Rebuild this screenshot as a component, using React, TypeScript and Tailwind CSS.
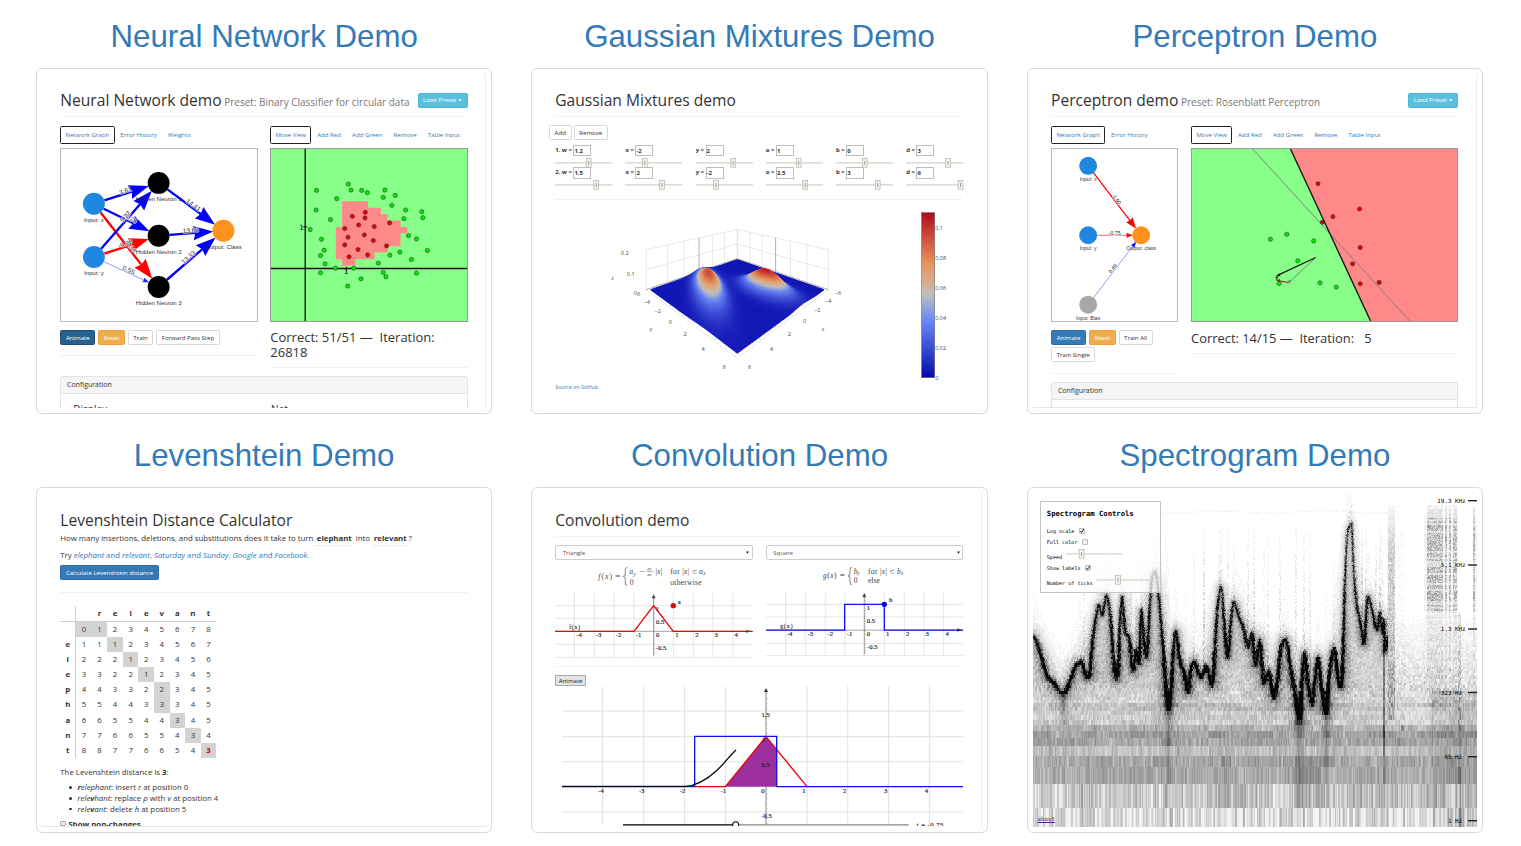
import React from "react";

/* ---------- shared pieces ---------- */

function Card({ title, children, right, bottom }: { title: string; children: React.ReactNode; right?: boolean; bottom?: boolean }) {
  return (
    <section className="flex w-[456.3px] flex-col">
      <h2 className="h-[68px] whitespace-nowrap pt-[18.5px] text-center font-['Liberation_Sans',sans-serif] text-[31.25px] leading-[35px] text-[#337ab7]">
        {title}
      </h2>
      <div className="h-[345.5px] rounded-[6px] border border-[#d9d9d9] bg-white p-[5px]">
        <div
          className={
            "relative h-[333.5px] overflow-hidden " +
            (right ? "border-r border-[#ececec] " : "") +
            (bottom ? "border-b border-b-[#e6e6e6]" : "")
          }
        >
          {children}
        </div>
      </div>
    </section>
  );
}

function Heading({ text, preset }: { text: string; preset?: string }) {
  return (
    <div className="flex h-[42.8px] w-[407.3px] items-start whitespace-nowrap border-b border-[#f3f3f3] pt-[17.5px]">
      <div className="text-[15.6px] leading-[16px] text-[#333]">
        {text}
        {preset && <span className="ml-[2.6px] text-[9.97px] text-[#777]">{preset}</span>}
      </div>
      {preset && (
        <div className="mt-[1.9px] ml-auto flex h-[15px] w-[50px] items-center justify-center gap-[2px] rounded-[2px] border border-[#46b8da] bg-[#5bc0de] text-[6px] text-white">
          Load Preset
          <svg width="4" height="3" viewBox="0 0 4 3">
            <path d="M0 .3h3.6L1.8 2.2z" fill="#fff" />
          </svg>
        </div>
      )}
    </div>
  );
}

function Tabs({ items }: { items: string[] }) {
  return (
    <div className="flex h-[17.6px] gap-[0.5px] whitespace-nowrap text-[6.1px] leading-[15px] text-[#337ab7]">
      {items.map((t, i) => (
        <div key={t} className={"rounded-[1.5px] border px-[4.3px] " + (i === 0 ? "border-[#222]" : "border-transparent")}>
          {t}
        </div>
      ))}
    </div>
  );
}

function Btn({ children, kind = "plain" }: { children: React.ReactNode; kind?: "plain" | "dark" | "primary" | "warn" }) {
  const k = {
    plain: "border-[#d8d8d8] bg-white text-[#333]",
    dark: "border-[#204d74] bg-[#286090] text-white",
    primary: "border-[#2e6da4] bg-[#337ab7] text-white",
    warn: "border-[#eea236] bg-[#f0ad4e] text-white",
  }[kind];
  return (
    <div className={"flex h-[15px] items-center whitespace-nowrap rounded-[1.5px] border px-[4.6px] text-[6.1px] leading-[13px] " + k}>{children}</div>
  );
}

function Panel({ children }: { children?: React.ReactNode }) {
  return (
    <div className="h-[60px] w-[407.3px] rounded-t-[2px] border border-[#e2e2e2]">
      <div className="h-[17px] border-b border-[#e2e2e2] bg-[#f5f5f5] pl-[5.8px] text-[7px] leading-[16.4px] text-[#333]">Configuration</div>
      {children}
    </div>
  );
}

/* ---------- network graphs ---------- */

type Pt = [number, number];
type EdgeSpec = { a: Pt; b: Pt; r: number; w: number; head: number; color: string; label: string; at?: number; opacity?: number; size?: number };

function Edge({ a, b, r, w, head, color, opacity = 1 }: EdgeSpec) {
  const dx = b[0] - a[0], dy = b[1] - a[1];
  const len = Math.hypot(dx, dy), ux = dx / len, uy = dy / len;
  const tip: Pt = [b[0] - ux * (r - 2), b[1] - uy * (r - 2)];
  const base: Pt = [tip[0] - ux * head, tip[1] - uy * head];
  const hw = head * 0.36;
  return (
    <g>
      <line x1={a[0] + ux * r} y1={a[1] + uy * r} x2={base[0] + ux * 6} y2={base[1] + uy * 6} stroke={color} strokeWidth={w} opacity={opacity} />
      <polygon
        fill={color}
        points={`${tip[0]},${tip[1]} ${base[0] - uy * hw},${base[1] + ux * hw} ${base[0] + ux * head * 0.1},${base[1] + uy * head * 0.1} ${base[0] + uy * hw},${base[1] - ux * hw}`}
      />
    </g>
  );
}

function EdgeLabel({ a, b, label, at = 0.5, size = 19.5 }: EdgeSpec) {
  const dx = b[0] - a[0], dy = b[1] - a[1];
  const ang = (Math.atan2(dy, dx) * 180) / Math.PI;
  const mx = a[0] + dx * at, my = a[1] + dy * at;
  return (
    <text x={mx} y={my} transform={`rotate(${ang} ${mx} ${my})`} textAnchor="middle" dy={-2} fontSize={size} fill="#222" stroke="#fff" strokeWidth={3} strokeOpacity={0.85} paintOrder="stroke">
      {label}
    </text>
  );
}

function Edges({ list }: { list: EdgeSpec[] }) {
  return (
    <>
      {list.map((e, i) => <Edge key={"e" + i} {...e} />)}
      {list.map((e, i) => <EdgeLabel key={"l" + i} {...e} />)}
    </>
  );
}

function Node({ x, y, r, fill, label, size = 18.3 }: { x: number; y: number; r: number; fill: string; label: string; size?: number }) {
  return (
    <g>
      <circle cx={x} cy={y} r={r} fill={fill} />
      <text x={x} y={y + r + (r > 30 ? 22 : 18)} textAnchor="middle" fontSize={size} fill="#333">{label}</text>
    </g>
  );
}

function NeuralGraph() {
  const ix: Pt = [191, 431], iy: Pt = [191, 591], h1: Pt = [386, 368], h2: Pt = [386, 527], h3: Pt = [386, 681], o: Pt = [581, 512];
  const blue = { r: 33, w: 7, head: 60, color: "#00f" }, red = { r: 33, w: 7, head: 60, color: "#f00" };
  const list: EdgeSpec[] = [
    { a: ix, b: h1, ...blue, label: "3.61" },
    { a: ix, b: h2, ...blue, label: "-5.78", at: 0.54 },
    { a: ix, b: h3, ...red, label: "-5.33", at: 0.53 },
    { a: iy, b: h1, ...blue, label: "5.22", at: 0.52 },
    { a: iy, b: h2, ...red, label: "-9.20" },
    { a: iy, b: h3, r: 33, w: 1.8, head: 20, color: "#22f", opacity: 0.8, label: "0.55", at: 0.52 },
    { a: h1, b: o, ...blue, label: "14.41", at: 0.51 },
    { a: h2, b: o, ...blue, label: "13.63" },
    { a: h3, b: o, ...blue, label: "13.33", at: 0.49 },
  ];
  return (
    <svg className="block h-[173.5px] w-[197.3px] border border-[#bbb] font-['Liberation_Sans',sans-serif]" viewBox="92 266 588 516" preserveAspectRatio="none">
      <Edges list={list} />
      <Node x={191} y={431} r={33} fill="#1f87e0" label="Input: x" />
      <Node x={191} y={591} r={33} fill="#1f87e0" label="Input: y" />
      <Node x={386} y={368} r={33} fill="#000" label="Hidden Neuron 1" />
      <Node x={386} y={527} r={33} fill="#000" label="Hidden Neuron 2" />
      <Node x={386} y={681} r={33} fill="#000" label="Hidden Neuron 3" />
      <Node x={581} y={512} r={33} fill="#ff921c" label="Output: Class" />
    </svg>
  );
}

const GREEN: Pt[] = [[169, 390], [265, 371], [273, 389], [305, 390], [322, 397], [375, 389], [406, 405], [370, 411], [230, 415], [396, 435], [437, 449], [168, 449], [486, 454], [489, 472], [432, 475], [211, 478], [150, 508], [446, 526], [470, 536], [184, 537], [192, 570], [181, 586], [503, 571], [420, 576], [390, 585], [455, 598], [355, 609], [195, 611], [226, 624], [281, 624], [181, 638], [370, 637], [378, 650], [470, 639], [303, 656], [263, 678]];
const RED: Pt[] = [[277, 468], [316, 456], [315, 473], [296, 494], [343, 499], [389, 488], [254, 505], [313, 524], [264, 531], [340, 541], [254, 554], [380, 557], [294, 568], [323, 584], [267, 590]];

function Dot({ p, fill }: { p: Pt; fill: string }) {
  return <circle cx={p[0]} cy={p[1]} r={6.3} fill={fill} stroke="#222" strokeWidth={1.6} />;
}

function NeuralPlot() {
  return (
    <svg className="block h-[173.5px] w-[197.3px] border border-[#999] bg-[#8f8] font-['DejaVu_Sans',sans-serif]" viewBox="32 265.5 588 516" preserveAspectRatio="none">
      <path d="M246 423H324V442H363V461H383V481H422V500H442V519H422V558H383V577H344V597H286V616H246V597H227V500H246Z" fill="#f88" />
      <path d="M135 265V785M31 625H623" stroke="#111" strokeWidth={4} />
      <path d="M129 500H141M259 619V631" stroke="#111" strokeWidth={3} />
      <text x={117} y={508} fontSize={22}>1</text>
      <text x={252} y={643} fontSize={22}>1</text>
      {GREEN.map((p, i) => <Dot key={i} p={p} fill="#00f000" />)}
      {RED.map((p, i) => <Dot key={i} p={p} fill="#f00000" />)}
    </svg>
  );
}

function NeuralCard() {
  return (
    <div className="flex flex-col pl-[18.3px]">
      <Heading text="Neural Network demo" preset="Preset: Binary Classifier for circular data" />
      <div className="flex gap-[12.7px] pt-[9.4px]">
        <div className="flex w-[197.3px] flex-col">
          <Tabs items={["Network Graph", "Error History", "Weights"]} />
          <div className="pt-[4.6px]"><NeuralGraph /></div>
          <div className="flex gap-[2.8px] pt-[8.4px]">
            <Btn kind="dark">Animate</Btn><Btn kind="warn">Reset</Btn><Btn>Train</Btn><Btn>Forward Pass Step</Btn>
          </div>
          <div className="mt-[10px] border-t border-[#f1f1f1]" />
        </div>
        <div className="flex w-[197.3px] flex-col">
          <Tabs items={["Move View", "Add Red", "Add Green", "Remove", "Table Input"]} />
          <div className="pt-[4.6px]"><NeuralPlot /></div>
          <div className="whitespace-pre pt-[8.6px] text-[13px] leading-[14.4px] text-[#333]">{"Correct: 51/51 —  Iteration:\n26818"}</div>
          <div className="mt-[7.5px] border-t border-[#f1f1f1]" />
        </div>
      </div>
      <div className="pt-[8.2px]">
        <Panel>
          <div className="flex pt-[10.4px] text-[10px] leading-[10px] text-[#333]">
            <div className="w-[197.3px] pl-[12px]">Display</div>
            <div className="pl-[12.5px]">Net</div>
          </div>
        </Panel>
      </div>
    </div>
  );
}

/* ---------- gaussian mixtures ---------- */

const PARAMS = [
  [["1. w =", "1.2", 33.7], ["x =", "-2", 19.7], ["y =", "2", 37.3], ["a =", "1", 32.7], ["b =", "0", 28.7], ["d =", "3", 42]],
  [["2. w =", "1.5", 41.3], ["x =", "2", 37], ["y =", "-2", 20], ["a =", "2.5", 39.3], ["b =", "3", 41.7], ["d =", "6", 54.5]],
] as [string, string, number][][];

function Slider({ width, at }: { width: number; at: number }) {
  return (
    <svg className="block" width={width} height="10" viewBox={`0 0 ${width} 10`}>
      <rect x="0" y="4.3" width={width} height="1.2" fill="#d6cdc6" />
      <rect x={at - 2.4} y="0.6" width="4.8" height="8.6" fill="#f4f2ee" stroke="#b5aea4" strokeWidth=".7" />
      <path d={`M${at} 3v4`} stroke="#8d867e" strokeWidth=".8" />
    </svg>
  );
}

function project(x: number, y: number, z: number): Pt {
  const a = (y - x) / 12, b = (x + y) / 12 + 1;
  const w = 1 - 0.2645 * b;
  return [637 + (191.4 * a) / w, 598 + (66.2 * b - 442 * z) / w];
}
function gauss(x: number, y: number, wt: number, mx: number, my: number, a: number, b: number, d: number) {
  const det = a * d - b * b, dx = x - mx, dy = y - my;
  return (wt / (2 * Math.PI * Math.sqrt(det))) * Math.exp(-0.5 * ((d * dx * dx - 2 * b * dx * dy + a * dy * dy) / det));
}
const height = (x: number, y: number) => gauss(x, y, 1.2, -2, 2, 1, 0, 3) + gauss(x, y, 1.5, 2, -2, 2.5, 3, 6);
const STOPS: [number, number, number, number][] = [[0, 18, 22, 180], [0.35, 96, 127, 243], [0.5, 190, 190, 190], [0.6, 220, 170, 132], [0.7, 230, 145, 90], [1, 190, 20, 32]];
function ramp(t: number) {
  t = Math.min(1, Math.max(0, t));
  let i = 0;
  while (i < STOPS.length - 2 && t > STOPS[i + 1][0]) i++;
  const p = STOPS[i], q = STOPS[i + 1], f = (t - p[0]) / (q[0] - p[0]);
  const m = (k: number) => Math.round(p[k] + (q[k] - p[k]) * f);
  return `rgb(${m(1)},${m(2)},${m(3)})`;
}

function Surface() {
  const N = 84, s = 12 / N;
  const cells: React.ReactNode[] = [];
  for (let sum = 0; sum <= 2 * N - 2; sum++) {
    for (let i = Math.max(0, sum - N + 1); i <= Math.min(N - 1, sum); i++) {
      const j = sum - i, x = -6 + i * s, y = -6 + j * s;
      const pts = [[x, y], [x + s, y], [x + s, y + s], [x, y + s]].map(([u, v]) => project(u, v, height(u, v) * 0.9).map((n) => n.toFixed(1)).join(","));
      const c = ramp(height(x + s / 2, y + s / 2) / 0.111);
      cells.push(<polygon key={i + "-" + j} points={pts.join(" ")} fill={c} stroke={c} strokeWidth={2.4} />);
    }
  }
  const L = 6.3;
  const seg = (p: Pt, q: Pt) => `M${p[0].toFixed(1)} ${p[1].toFixed(1)}L${q[0].toFixed(1)} ${q[1].toFixed(1)}`;
  let grid = "";
  for (const v of [-L, -4, -2, 2, 4, L]) grid += seg(project(v, -L, 0), project(v, -L, 0.2)) + seg(project(-L, v, 0), project(-L, v, 0.2));
  for (const z of [0.1, 0.2]) grid += seg(project(L, -L, z), project(-L, -L, z)) + seg(project(-L, L, z), project(-L, -L, z));
  for (const v of [-4, -2, 0, 2, 4, 6]) grid += seg(project(L, v, 0), project(L - 0.5, v, 0)) + seg(project(v, L, 0), project(v, L - 0.5, 0));
  grid += seg(project(L, -L, 0), project(L, L, 0)) + seg(project(-L, L, 0), project(L, L, 0));
  const zero = seg(project(0, -L, 0), project(0, -L, 0.2)) + seg(project(-L, 0, 0), project(-L, 0, 0.2)) + seg(project(L, -L, 0), project(-L, -L, 0)) + seg(project(-L, L, 0), project(-L, -L, 0));
  const labels: [string, number, number][] = [["0.2", 299, 585], ["0.1", 317, 647], ["0", 331, 703], ["z", 263, 660], ["6", 341, 708], ["−4", 365, 730], ["−2", 398, 758], ["0", 436, 790], ["2", 480, 827], ["4", 534, 872], ["6", 598, 925], ["y", 378, 811], ["6", 674, 925], ["4", 740, 871], ["2", 793, 826], ["0", 839, 788], ["−2", 877, 756], ["−4", 910, 729], ["−6", 939, 704], ["x", 894, 813]];
  const bar: [string, number][] = [["0.1", 504], ["0.08", 594], ["0.06", 684], ["0.04", 774], ["0.02", 864], ["0", 954]];
  return (
    <svg className="block h-[177px] w-[408.3px] font-['Open_Sans',sans-serif]" viewBox="90 440 1225 531">
      <path d={grid} stroke="#e2e2e2" strokeWidth={2.4} fill="none" />
      <path d={zero} stroke="#8a8a8a" strokeWidth={2} fill="none" />
      {cells}
      {labels.map(([t, x, y], i) => <text key={i} x={x} y={y} fontSize={16.5} fill="#444" textAnchor="middle">{t}</text>)}
      <defs>
        <linearGradient id="scale" x1="0" y1="1" x2="0" y2="0">
          <stop offset="0" stopColor="rgb(5,10,172)" /><stop offset=".35" stopColor="rgb(106,137,247)" /><stop offset=".5" stopColor="rgb(190,190,190)" />
          <stop offset=".6" stopColor="rgb(220,170,132)" /><stop offset=".7" stopColor="rgb(230,145,90)" /><stop offset="1" stopColor="rgb(178,10,28)" />
        </linearGradient>
      </defs>
      <rect x={1190} y={457} width={39} height={495} fill="url(#scale)" stroke="#555" strokeWidth={1.5} />
      {bar.map(([t, y]) => <text key={t} x={1231} y={y + 6} fontSize={16.5} fill="#444">{t}</text>)}
    </svg>
  );
}

function GaussianCard() {
  return (
    <div className="flex flex-col pl-[17.9px]">
      <Heading text="Gaussian Mixtures demo" />
      <div className="-ml-[6.7px] flex gap-[1.8px] pt-[8.5px]"><Btn><span className="px-[0.4px]">Add</span></Btn><Btn>Remove</Btn></div>
      <div className="flex flex-col pt-[4.7px]">
        {PARAMS.map((row, r) => (
          <div key={r} className="flex h-[22.5px] gap-[12.9px]">
            {row.map(([l, v, at], i) => (
              <div key={i} className="flex w-[57.3px] flex-col">
                <div className="flex items-start whitespace-nowrap text-[5.9px] font-bold leading-[11px] text-[#333]">
                  <span className="w-auto pr-[1.6px]">{l}</span>
                  <div className="h-[11.3px] w-[18px] border border-[#bdbdbd] leading-[10px]">{v}</div>
                </div>
                <div className="pt-[1.5px]"><Slider width={57.3} at={at} /></div>
              </div>
            ))}
          </div>
        ))}
      </div>
      <div className="mt-[9.1px] w-[407.3px] border-t border-[#f1f1f1]" />
      <div className="pt-[7.2px]"><Surface /></div>
      <div className="-mt-[1.6px] text-[5.2px] leading-[8px] text-[#337ab7]">Source on GitHub</div>
    </div>
  );
}

/* ---------- perceptron ---------- */

function PerceptronGraph() {
  const x: Pt = [204, 316], y: Pt = [204, 525], b: Pt = [204, 734], o: Pt = [364, 525];
  const list: EdgeSpec[] = [
    { a: x, b: o, r: 27, w: 3.8, head: 34, color: "#f00", label: "-1.60", at: 0.5, size: 15.5 },
    { a: y, b: o, r: 27, w: 2.4, head: 20, color: "#f00", opacity: 0.75, label: "-0.75", size: 15.5 },
    { a: b, b: o, r: 27, w: 2, head: 18, color: "#00f", opacity: 0.6, label: "0.49", at: 0.5, size: 15.5 },
  ];
  return (
    <svg className="block h-[173.5px] w-[127px] border border-[#bbb] font-['Liberation_Sans',sans-serif]" viewBox="95 265.5 377 516" preserveAspectRatio="none">
      <Edges list={list} />
      <Node x={204} y={316} r={27} fill="#1f87e0" label="Input: x" size={15.5} />
      <Node x={204} y={525} r={27} fill="#1f87e0" label="Input: y" size={15.5} />
      <Node x={204} y={734} r={27} fill="#a8a8a8" label="Input: Bias" size={15.5} />
      <Node x={364} y={525} r={27} fill="#ff921c" label="Output: class" size={15.5} />
    </svg>
  );
}

function PerceptronPlot() {
  const g: Pt[] = [[61, 537], [110, 522], [191, 542], [143, 602], [87, 670], [210, 668], [259, 681]];
  const r: Pt[] = [[204, 370], [249, 469], [329, 446], [217, 486], [331, 562], [308, 611], [331, 671], [388, 667]];
  return (
    <svg className="block h-[173.5px] w-[267.3px] border border-[#999] bg-[#8f8]" viewBox="-175 265.5 798 516" preserveAspectRatio="none">
      <path d="M121 265H630V785H363Z" fill="#f88" />
      <path d="M7 265L482 785" stroke="#808080" strokeWidth={3} />
      {r.map((p, i) => <Dot key={i} p={p} fill="#f00000" />)}
      <path d="M121 265L363 785" stroke="#111" strokeWidth={4} />
      {g.map((p, i) => <Dot key={i} p={p} fill="#00f000" />)}
      <path d="M197 592L117 667" stroke="#808080" strokeWidth={3} /><path d="M113 669l4-11 8 8z" fill="#808080" />
      <path d="M197 592L84 645" stroke="#111" strokeWidth={3.4} /><path d="M78 648l9-9 4 9z" fill="#111" />
      <path d="M115 667L86 662" stroke="#b01010" strokeWidth={3.4} /><path d="M80 661l9-5 0 10z" fill="#b01010" />
      <path d="M80 650V661" stroke="#066b06" strokeWidth={4} /><path d="M75 654h10l-5-9z" fill="#066b06" />
    </svg>
  );
}

function PerceptronCard() {
  return (
    <div className="flex flex-col pl-[18.3px]">
      <Heading text="Perceptron demo" preset="Preset: Rosenblatt Perceptron" />
      <div className="flex gap-[13px] pt-[9.4px]">
        <div className="flex w-[127px] flex-col">
          <Tabs items={["Network Graph", "Error History"]} />
          <div className="pt-[4.6px]"><PerceptronGraph /></div>
          <div className="flex flex-wrap gap-x-[2.8px] gap-y-[2px] pt-[8.4px]">
            <Btn kind="primary">Animate</Btn><Btn kind="warn">Reset</Btn><Btn>Train All</Btn><Btn>Train Single</Btn>
          </div>
          <div className="mt-[10.6px] border-t border-[#f1f1f1]" />
        </div>
        <div className="flex w-[267.3px] flex-col">
          <Tabs items={["Move View", "Add Red", "Add Green", "Remove", "Table Input"]} />
          <div className="pt-[4.6px]"><PerceptronPlot /></div>
          <div className="whitespace-pre pt-[8.8px] text-[12.9px] leading-[14.4px] text-[#333]">{"Correct: 14/15 —  Iteration:   5"}</div>
          <div className="mt-[7.5px] border-t border-[#f1f1f1]" />
        </div>
      </div>
      <div className="pt-[8.2px]"><Panel /></div>
    </div>
  );
}

/* ---------- levenshtein ---------- */

const SRC = ["", "e", "l", "e", "p", "h", "a", "n", "t"];
const DST = ["", "r", "e", "l", "e", "v", "a", "n", "t"];
const DIST = ["012345678", "111234567", "222123456", "332212345", "443322345", "554433345", "665544345", "776655434", "887766543"];
const PATH = ["0,0", "0,1", "1,2", "2,3", "3,4", "4,5", "5,5", "6,6", "7,7", "8,8"];

function Bullet({ children }: { children: React.ReactNode }) {
  return (
    <li className="flex items-center whitespace-pre">
      <span className="mr-[5.6px] h-[2.6px] w-[2.6px] rounded-full bg-[#333]" />
      <span>{children}</span>
    </li>
  );
}

function LevenshteinCard() {
  return (
    <div className="flex flex-col pl-[18.3px] text-[7.82px] text-[#333]">
      <div className="whitespace-nowrap pt-[18.8px] text-[15.6px] leading-[16px]">Levenshtein Distance Calculator</div>
      <div className="flex items-start whitespace-nowrap pt-[4.7px] leading-[12px]">
        How many insertions, deletions, and substitutions does it take to turn
        <b className="ml-[2px] h-[13.4px] border-b border-[#ececec] px-[1.6px]">elephant</b>
        <span className="mx-[2.3px]">into</span>
        <b className="h-[13.4px] border-b border-[#ececec] px-[1.6px]">relevant</b>
        <span className="ml-[0.3px]">?</span>
      </div>
      <div className="whitespace-nowrap pt-[3.1px] leading-[12px] text-[#337ab7]">
        <span className="text-[#333]">Try </span><i>elephant</i> and <i>relevant</i>, <i>Saturday</i> and <i>Sunday</i>, <i>Google</i> and <i>Facebook</i>.
      </div>
      <div className="flex pt-[4px]"><Btn kind="primary">Calculate Levenshtein distance</Btn></div>
      <div className="mt-[12px] w-[407.3px] border-t border-[#f1f1f1]" />
      <div className="mt-[13px] flex w-[156px] flex-col text-center">
        <div className="flex h-[15.6px] border-b border-[#cfcfcf] font-bold leading-[15px]">
          <div className="w-[15.9px] border-r border-[#cfcfcf]" />
          {DST.map((c, i) => <div key={i} className="w-[15.57px]">{c}</div>)}
        </div>
        {DIST.map((row, r) => (
          <div key={r} className="flex h-[15.16px] leading-[15.6px]">
            <div className="w-[15.9px] border-r border-[#cfcfcf] font-bold">{SRC[r]}</div>
            {row.split("").map((d, c) => (
              <div key={c} className={"w-[15.57px] " + (PATH.includes(r + "," + c) ? "bg-[#d3d3d3] " : "") + (r === 8 && c === 8 ? "font-bold text-[#c00000]" : "")}>{d}</div>
            ))}
          </div>
        ))}
      </div>
      <div className="pt-[8.2px] leading-[12px]">The Levenshtein distance is <b>3</b>:</div>
      <ul className="pt-[4px] pl-[9px] leading-[10.8px]">
        <Bullet><i><b>r</b>elephant</i>: insert <i>r</i> at position 0</Bullet>
        <Bullet><i>rele<b>v</b>hant</i>: replace <i>p</i> with <i>v</i> at position 4</Bullet>
        <Bullet><i>rele<b>v</b>ant</i>: delete <i>h</i> at position 5</Bullet>
      </ul>
      <div className="flex items-center pt-[3px] font-bold leading-[12px]">
        <span className="mr-[2.3px] h-[5.6px] w-[5.6px] rounded-[1px] border border-[#aaa] bg-[#eee]" />Show non-changes
      </div>
    </div>
  );
}

/* ---------- convolution ---------- */

function Select({ label }: { label: string }) {
  return (
    <div className="flex h-[14.8px] w-[197.6px] items-center rounded-[2px] border border-[#ccc] pr-[2.5px] pl-[6.5px] text-[6px] text-[#555]">
      <span className="flex-1 pt-[0.5px]">{label}</span>
      <svg width="3" height="3" viewBox="0 0 3 3"><path d="M0 .4h3L1.5 2.8z" fill="#222" /></svg>
    </div>
  );
}

const grey = "#dcdcdc";

function TrianglePlot() {
  const vs = [149, 209, 268, 328, 446, 506, 565, 625];
  const lab: [string, number, number][] = [["-4", 163, 471], ["-3", 222, 471], ["-2", 282, 471], ["-1", 342, 471], ["0", 399, 471], ["1", 457, 471], ["2", 517, 471], ["3", 575, 471], ["4", 635, 471], ["1", 398, 393], ["0.5", 407, 432], ["-0.5", 409, 510]];
  return (
    <svg className="block h-[97.7px] w-[197.6px] font-['Liberation_Serif',serif]" viewBox="91 240 593 293">
      <g fontSize={23} fill="#444" fontStyle="italic">
        <text x={221} y={296} textLength={41}>f<tspan fontStyle="normal">(</tspan>x<tspan fontStyle="normal">)</tspan></text>
        <text x={271} y={296} fontStyle="normal" textLength={16} lengthAdjust="spacingAndGlyphs">=</text>
        <text x={314} y={282}>a</text><text x={326} y={287} fontSize={16}>y</text>
        <text x={344} y={282} fontStyle="normal" textLength={16} lengthAdjust="spacingAndGlyphs">−</text>
        <text x={368} y={269} fontSize={15}>a<tspan fontSize={11} dy={2}>y</tspan></text>
        <text x={368} y={287} fontSize={15}>a<tspan fontSize={11} dy={2}>x</tspan></text>
        <path d="M366 274H387" stroke="#666" strokeWidth={1.5} />
        <text x={391} y={282} textLength={22}>|x|</text>
        <text x={437} y={282} fontStyle="normal" textLength={57}>for |<tspan fontStyle="italic">x</tspan>|</text>
        <text x={502} y={282} fontStyle="normal" textLength={15} lengthAdjust="spacingAndGlyphs">≤</text>
        <text x={523} y={282}>a</text><text x={536} y={286} fontSize={16}>x</text>
        <text x={315} y={314} fontStyle="normal">0</text>
        <text x={437} y={314} fontStyle="normal" textLength={94}>otherwise</text>
      </g>
      <path d="M308 262q-6 0-6 7v13q0 7-6 7q6 0 6 7v13q0 7 6 7" fill="none" stroke="#555" strokeWidth={2.2} />
      <path d={vs.map((v) => `M${v} 338V532`).join("") + "M91 377H684M91 415H684M91 493H684M91 532H684"} stroke={grey} strokeWidth={2.2} />
      <path d="M387 348V528" stroke="#888" strokeWidth={2.5} /><path d="M387 343l6 12h-12z" fill="#444" />
      <path d="M389 357V525" stroke="#999" strokeWidth={4} strokeDasharray="1.5 6.3" />
      <path d="M91 454H684" stroke="#777" strokeWidth={2} />
      <path d="M91 454H328L387 377L446 454H684" fill="none" stroke="#f00000" strokeWidth={4} strokeLinejoin="bevel" />
      <path d="M676 454l-11-5v10z" fill="#444" />
      <circle cx={446} cy={377} r={8} fill="#f00000" />
      <g fontSize={20} fill="#222" stroke="#222" strokeWidth={0.5} textAnchor="middle">
        {lab.map(([t, x, y], i) => <text key={i} x={x} y={y}>{t}</text>)}
        <text x={464} y={371}>a</text>
        <text x={150} y={448} strokeWidth={0.2} textLength={34}>f(x)</text>
      </g>
    </svg>
  );
}

function SquarePlot() {
  const vs = [92, 151, 211, 270, 388, 448, 507, 566];
  const lab: [string, number, number][] = [["-4", 104, 467], ["-3", 166, 467], ["-2", 226, 467], ["-1", 284, 467], ["0", 340, 467], ["1", 398, 467], ["2", 458, 467], ["3", 517, 467], ["4", 577, 467], ["1", 340, 389], ["0.5", 348, 428], ["-0.5", 352, 506]];
  return (
    <svg className="block h-[97.7px] w-[197.6px] font-['Liberation_Serif',serif]" viewBox="33 240 593 293">
      <g fontSize={23} fill="#444" fontStyle="italic">
        <text x={204} y={295} textLength={41}>g<tspan fontStyle="normal">(</tspan>x<tspan fontStyle="normal">)</tspan></text>
        <text x={254} y={295} fontStyle="normal" textLength={16} lengthAdjust="spacingAndGlyphs">=</text>
        <text x={296} y={281}>b</text><text x={307} y={286} fontSize={16}>y</text>
        <text x={339} y={281} fontStyle="normal" textLength={57}>for |<tspan fontStyle="italic">x</tspan>|</text>
        <text x={404} y={281} fontStyle="normal" textLength={15} lengthAdjust="spacingAndGlyphs">≤</text>
        <text x={426} y={281}>b</text><text x={438} y={285} fontSize={16}>x</text>
        <text x={296} y={309} fontStyle="normal">0</text>
        <text x={339} y={309} fontStyle="normal">else</text>
      </g>
      <path d="M291 262q-6 0-6 7v12q0 7-6 7q6 0 6 7v12q0 7 6 7" fill="none" stroke="#555" strokeWidth={2.2} />
      <path d={vs.map((v) => `M${v} 334V528`).join("") + "M33 373H626M33 411H626M33 490H626M33 527H626"} stroke={grey} strokeWidth={2.2} />
      <path d="M328 344V524" stroke="#888" strokeWidth={2.5} /><path d="M328 339l6 12h-12z" fill="#444" />
      <path d="M331 353V521" stroke="#999" strokeWidth={4} strokeDasharray="1.5 6.3" />
      <path d="M33 450.500H626" stroke="#777" strokeWidth={2} />
      <path d="M33 450.500H269V373H388V450.500H626" fill="none" stroke="#1212f5" strokeWidth={4} />
      <path d="M618 450l-11-5v10z" fill="#224" />
      <circle cx={388} cy={373} r={8} fill="#0000f0" />
      <g fontSize={20} fill="#222" stroke="#222" strokeWidth={0.5} textAnchor="middle">
        {lab.map(([t, x, y], i) => <text key={i} x={x} y={y}>{t}</text>)}
        <text x={407} y={366}>b</text>
        <text x={94} y={444} strokeWidth={0.2} textLength={38}>g(x)</text>
      </g>
    </svg>
  );
}

function ResultPlot() {
  const vs = [232, 355, 478, 600, 845, 967, 1090, 1212];
  const lab: [string, number, number][] = [["-4", 227, 939], ["-3", 349, 939], ["-2", 472, 939], ["-1", 594, 939], ["0", 713, 939], ["1", 836, 939], ["2", 958, 939], ["3", 1081, 939], ["4", 1203, 939], ["1.5", 721, 711], ["1", 715, 788], ["0.5", 721, 863], ["-0.5", 724, 1015]];
  return (
    <svg className="ml-[6.4px] block h-[139.7px] w-[401.7px] shrink-0 font-['Liberation_Serif',serif]" viewBox="110 619 1205 419">
      <path d={vs.map((v) => `M${v} 620V1037`).join("") + "M110 694H1315M110 771H1315M110 846H1315M110 997H1315"} stroke={grey} strokeWidth={2.6} />
      <path d="M722 632V1037" stroke="#888" strokeWidth={3} /><path d="M722 625l6 12h-12z" fill="#333" />
      <path d="M725 640V1037" stroke="#999" strokeWidth={4} strokeDasharray="1.5 13.5" />
      <path d="M110 923H1315" stroke="#aaa" strokeWidth={4} strokeDasharray="1.5 22.900" />
      <path d="M600 921L722 771L754 810V921Z" fill="#9c2f9c" />
      <path d="M480 921H600L722 771L845 921" fill="none" stroke="#f00000" strokeWidth={4} />
      <path d="M110 920H508V770H754V921H1315" fill="none" stroke="#1212f0" strokeWidth={4} />
      <path d="M110 921H478C510 919 545 900 575 872C600 848 615 826 632 811" fill="none" stroke="#0a0a14" strokeWidth={4} />
      <path d="M632 1035.500H1150" stroke="#888" strokeWidth={3.500} />
      <path d="M293 1035.500H632" stroke="#000" strokeWidth={4} />
      <circle cx={631} cy={1035} r={9} fill="#fff" stroke="#000" strokeWidth={3} />
      <g fontSize={20} fill="#222" stroke="#222" strokeWidth={0.5} textAnchor="middle">
        {lab.map(([t, x, y], i) => <text key={i} x={x} y={y}>{t}</text>)}
        <text x={1214} y={1042} textLength={80}>t = -0.75</text>
      </g>
    </svg>
  );
}

function ConvolutionCard() {
  return (
    <div className="flex flex-col pl-[17.9px] pt-[1px]">
      <Heading text="Convolution demo" />
      <div className="flex gap-[12.8px] pt-[8.7px]">
        <div><Select label="Triangle" /><TrianglePlot /></div>
        <div><Select label="Square" /><SquarePlot /></div>
      </div>
      <div className="mt-[7.8px] w-[407.3px] border-t border-[#f1f1f1]" />
      <div className="mt-[7.8px] flex">
        <div className="h-[11.6px] border border-[#aaa] bg-[#e4e4e4] px-[2.5px] text-[6.1px] leading-[9.8px] text-[#222]">Animate</div>
      </div>
      <ResultPlot />
    </div>
  );
}

/* ---------- spectrogram ---------- */

const RIDGE_KNOTS: Pt[] = ([[39, 470], [60, 520], [80, 585], [105, 615], [127, 640], [150, 600], [165, 560], [182, 545], [200, 590], [207, 590], [212, 520], [225, 420], [235, 375], [245, 405], [258, 345], [270, 410], [278, 520], [288, 595], [293, 560], [298, 430], [305, 350], [315, 460], [325, 470], [338, 570], [347, 510], [355, 550], [362, 390], [370, 480], [378, 530], [385, 420], [395, 290], [405, 275], [415, 350], [430, 530], [445, 690], [452, 620], [458, 510], [466, 455], [480, 550], [492, 580], [502, 635], [512, 560], [522, 545], [540, 590], [558, 560], [575, 615], [583, 500], [592, 370], [602, 320], [612, 440], [622, 530], [630, 430], [640, 365], [655, 410], [668, 440], [683, 500]] as Pt[])
  .concat(([[5, 460], [15, 555], [28, 480], [40, 610], [55, 575], [70, 655], [80, 600], [92, 500], [105, 478], [120, 560], [135, 650], [148, 720], [153, 620], [162, 520], [172, 600], [185, 670], [193, 600], [203, 535], [213, 620], [226, 700], [235, 590], [252, 505], [262, 590], [270, 620], [278, 500], [283, 300], [292, 150], [303, 130], [310, 270], [318, 370], [330, 430], [340, 490], [348, 390], [353, 350], [365, 390], [380, 450], [387, 400], [397, 460], [400, 420], [405, 510], [414, 470]] as Pt[]).map(([x, y]) => [x + 690, y] as Pt))
  .map(([x, y]) => [x / 3 - 13, y / 3 - 13] as Pt);

/* monotone cubic resampling keeps the crests round without overshoot */
const RIDGE: Pt[] = RIDGE_KNOTS.flatMap((p, i) => {
  const n = RIDGE_KNOTS[i + 1];
  if (!n) return [p];
  const slope = (k: number) => {
    const a = RIDGE_KNOTS[k - 1], b = RIDGE_KNOTS[k], c = RIDGE_KNOTS[k + 1];
    if (!a || !c) return 0;
    const s1 = (b[1] - a[1]) / (b[0] - a[0]), s2 = (c[1] - b[1]) / (c[0] - b[0]);
    return s1 * s2 <= 0 ? 0 : (2 * s1 * s2) / (s1 + s2);
  };
  const h = n[0] - p[0], m0 = slope(i), m1 = slope(i + 1);
  return [0, 0.25, 0.5, 0.75].map((t) => {
    const t2 = t * t, t3 = t2 * t;
    return [p[0] + h * t, (2 * t3 - 3 * t2 + 1) * p[1] + (t3 - 2 * t2 + t) * h * m0 + (3 * t2 - 2 * t3) * n[1] + (t3 - t2) * h * m1] as Pt;
  });
});

function hash(a: number, b: number) {
  let h = (a * 374761393 + b * 668265263) | 0;
  h = Math.imul(h ^ (h >>> 13), 1274126177);
  h ^= h >>> 16;
  return (h >>> 0) / 4294967296;
}

function buildSpectrogram() {
  const W = 444, LEVELS = 20;
  const coarse = [334, 315, 291, 274, 263, 253, 245, 238, 232, 227, 222, 218, 214, 210, 207, 204, 201, 198, 195, 192, 190, 188, 186, 184, 182, 180, 178, 176, 174, 172, 170, 168, 166, 164, 162, 160, 158, 156, 154, 152, 150];
  const edges: number[] = [];
  for (let y = 0; y < 150; y++) edges.push(y);
  for (let i = coarse.length - 1; i >= 0; i--) edges.push(coarse[i]);
  const bandTone = (y: number) => (y > 314 ? 0.17 : y > 290 ? 0.23 : y > 273 ? 0.33 : y > 262 ? 0.36 : y > 252 ? 0.27 : y > 245 ? 0.35 : y > 237 ? 0.38 : y > 231 ? 0.31 : y > 217 ? 0.2 : y > 209 ? 0.25 : 0.17);
  const paths: string[][] = [];
  for (let s = 0; s < 12; s++) paths.push(new Array(LEVELS + 1).fill(""));
  for (let e = 0; e < edges.length - 1; e++) {
    const y0 = edges[e], y1 = edges[e + 1], yc = (y0 + y1) / 2;
    let start = 0, level = -1;
    for (let x = 0; x <= W; x++) {
      let q = -2;
      if (x < W) {
        let d = 99, ry = 999;
        const jitter = (hash(x, e + 401) - 0.5) * 1.6;
        const px = x + jitter;
        for (let i = 0; i < RIDGE.length - 1; i++) {
          const p = RIDGE[i], n = RIDGE[i + 1];
          if (n[0] < x - 18 || p[0] > x + 18) continue;
          const dx = n[0] - p[0], dy = n[1] - p[1];
          const t = Math.max(0, Math.min(1, ((px - p[0]) * dx + (yc - p[1]) * dy) / (dx * dx + dy * dy)));
          d = Math.min(d, Math.hypot(px - p[0] - t * dx, yc - p[1] - t * dy));
          if (x >= p[0] && x < n[0]) ry = p[1] + (dy * (x - p[0])) / dx;
        }
        if (ry > 900) ry = 150;
        const below = yc > ry;
        const n1 = hash(x, e + 11), n2 = hash(x >> 1, e * 7 + 3);
        const inSignal = x < 355;
        let v = 0;
        if (y0 >= 196) {
          const spread = y0 > 285 ? 0.34 : 0.22;
          const slow = hash(x >> 4, e + 50) - 0.5;
          v = bandTone(yc) + (0.5 * n1 + 0.5 * n2 - 0.5) * spread + slow * 0.08;
          if (y0 > 313 && n2 < 0.3) v = 0.03 + n1 * 0.06;
          if (!inSignal && y0 < 232 && x < 398) v *= 0.75;
          if (x > 398) v += 0.06;
        } else {
          const dist = yc - ry;
          if (below && inSignal) v = 0.07 + n2 * 0.1 + Math.max(0, (yc - 120) / 80) * n1 * 0.14;
          else if (inSignal) v = Math.max(0, 0.18 * Math.exp(dist / 22)) * (n1 > 0.6 ? 1 : 0.2);
          else v = yc > 90 ? Math.pow((yc - 90) / 110, 2) * (0.4 * n1 + 0.6 * n2) * 0.3 : 0;
          if (!below && inSignal) {
            const streak = hash(x >> 1, 77);
            if (streak > 0.78 && yc > 25 && x > 40) v += (streak - 0.76) * (n1 > 0.55 ? 0.9 : 0.05) * Math.min(1, (yc - 20) / 90);
          }
        }
        const k = Math.max(0.15, Math.min(1, (yc - 50) / 130));
        const core = (0.36 + 0.26 * k) * Math.exp(-Math.pow(d / (0.9 + 0.8 * k), 2));
        const halo = (0.36 + 0.38 * k) * Math.exp(-d / (2 + 2.8 * k)) * (0.6 + 0.5 * n1);
        v += (core + halo) * (x < 355 ? 1 : 0.1);
        if (x >= 355 && x <= 361 && yc > 12 && yc < 228) v += (0.06 + 0.24 * n1) * Math.min(1, yc / 60);
        if (x >= 350 && x <= 351 && yc > 150) v += yc < 260 ? 0.35 : 0.12;
        if (x > 361 && x < 372 && yc > 40) v += n1 > 0.8 ? 0.06 : 0;
        const block = (x > 390 && x < 425) || x > 439;
        if (block && yc > 12 && yc < 215) {
          const strength = yc < 118 ? 0.4 : 0.12;
          const pulse = hash(x >> 1, 5) > 0.42 ? 1 : 0.2;
          v += strength * pulse * (0.2 + 0.9 * n1) * (hash(3, yc >> 1) > 0.3 ? 1 : 0.5) * (yc < 25 ? 0.4 : 1);
        }
        if (x >= 425 && x <= 427 && yc > 120) v += 0.22 * n1;
        for (const [cx, len] of [[30, 28], [135, 110], [266, 115], [293, 75]]) {
          const off = Math.abs(x - cx);
          if (off < 5 && yc > 198 && yc < 205 + len) v += 0.3 * Math.exp(-off / 3) * (1 - (yc - 198) / (len + 60));
        }
        if (yc > 262 && yc < 315 && ((x > 190 && x < 198) || (x > 260 && x < 296))) v += 0.07;
        const rim = 19 + Math.sin(x / 17) * 1.4;
        if (inSignal && Math.abs(yc - rim) < 1 && n2 > 0.5) v += 0.06;
        q = Math.round(Math.max(0, Math.min(1, v)) * LEVELS);
      }
      if (q !== level) {
        if (level > 0) paths[Math.min(11, Math.floor(y0 / 28))][level] += `M${start} ${y0}h${x - start}v${y1 - y0}H${start}z`;
        start = x;
        level = q;
      }
    }
  }
  return paths.map((group, s) => group.map((d, l) => (d ? <path key={s + "-" + l} d={d} fill={`rgb(${255 - l * 12.5},${255 - l * 12.5},${255 - l * 12.5})`} /> : null)));
}

function Check({ on }: { on?: boolean }) {
  return (
    <svg width="6" height="6" viewBox="0 0 6 6" className="ml-[4.5px]">
      <rect x=".4" y=".4" width="5.2" height="5.2" rx=".8" fill="#eee" stroke="#999" strokeWidth=".7" />
      {on && <path d="M1.3 3l1.2 1.500L4.900 1" fill="none" stroke="#222" strokeWidth="1" />}
    </svg>
  );
}

function SpectrogramCard() {
  const ticks: [string, number][] = [["19.3 KHz", 7.7], ["5.1 KHz", 72], ["1.3 KHz", 136], ["323 Hz", 199.5], ["65 Hz", 263.7], ["1 Hz", 327.7]];
  return (
    <div className="relative h-[334px] w-[444px] font-['DejaVu_Sans_Mono',monospace]">
      <svg className="block" width="444" height="334" viewBox="0 0 444 334">
        <g shapeRendering="crispEdges">{buildSpectrogram()}</g>
        {ticks.map(([t, y]) => (
          <g key={t}>
            <text x={t.includes("K") ? 432.5 : 429} y={y + 2} fontSize={5.85} textAnchor="end" fill="#000" xmlSpace="preserve">{t}</text>
            <rect x={435} y={y - 0.7} width={9} height={1.4} fill="#222" />
          </g>
        ))}
      </svg>
      <div className="absolute left-[7px] top-[8.3px] flex h-[91.5px] w-[120.8px] flex-col whitespace-nowrap border border-[#c4c4c4] bg-white/70 pl-[6px] text-[5.1px] leading-[8px] text-black">
        <div className="pt-[6.6px] text-[7.23px] font-bold leading-[10px]">Spectrogram Controls</div>
        <div className="flex items-center pt-[8.4px]">Log scale<Check on /></div>
        <div className="flex items-center pt-[3px]">Full color<Check /></div>
        <div className="flex h-[14.7px] items-end">Speed<div className="ml-[3.5px] pb-[1.5px]"><Slider width={56} at={15.5} /></div></div>
        <div className="flex items-center pt-[3px]">Show labels<Check on /></div>
        <div className="flex h-[14.7px] items-end">Number of ticks<div className="ml-[3.5px] pb-[1.8px]"><Slider width={56} at={22} /></div></div>
      </div>
      <div className="absolute bottom-[3.7px] left-[4.7px] text-[5.8px] leading-[8px] text-[#551a8b] underline">about</div>
    </div>
  );
}

/* ---------- page ---------- */

export default function App() {
  return (
    <main className="grid h-[846px] w-[1521px] grid-cols-[456.3px_456.3px_456.3px] content-start gap-x-[39.1px] gap-y-[5.5px] overflow-hidden bg-white pl-[36px] font-['Open_Sans',sans-serif]">
      <Card title="Neural Network Demo" right><NeuralCard /></Card>
      <Card title="Gaussian Mixtures Demo"><GaussianCard /></Card>
      <Card title="Perceptron Demo" right bottom><PerceptronCard /></Card>
      <Card title="Levenshtein Demo" bottom><LevenshteinCard /></Card>
      <Card title="Convolution Demo" right><ConvolutionCard /></Card>
      <Card title="Spectrogram Demo"><SpectrogramCard /></Card>
    </main>
  );
}
